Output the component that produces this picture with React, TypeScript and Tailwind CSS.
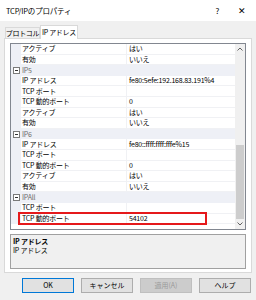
import React from 'react';

type Row = { name: string; value?: string; cat?: boolean };

const rows: Row[] = [
  { name: 'アクティブ', value: 'はい' },
  { name: '有効', value: 'いいえ' },
  { name: 'IP5', cat: true },
  { name: 'IP アドレス', value: 'fe80:5efe:192.168.83.191%4' },
  { name: 'TCP ポート', value: '' },
  { name: 'TCP 動的ポート', value: '0' },
  { name: 'アクティブ', value: 'はい' },
  { name: '有効', value: 'いいえ' },
  { name: 'IP6', cat: true },
  { name: 'IP アドレス', value: 'fe80::ffff:ffff:fffe%15' },
  { name: 'TCP ポート', value: '' },
  { name: 'TCP 動的ポート', value: '0' },
  { name: 'アクティブ', value: 'はい' },
  { name: '有効', value: 'いいえ' },
  { name: 'IPAll', cat: true },
  { name: 'TCP ポート', value: '' },
  { name: 'TCP 動的ポート', value: '54102' },
];

const font = "font-['Meiryo_UI','Noto_Sans_CJK_JP',sans-serif]";

const GridRow = ({ row }: { row: Row }) => {
  if (row.cat) {
    return (
      <div className="flex h-[10.6px] items-center bg-[#eef0f6]">
        <div className="w-[10px] flex justify-center">
          <div className="w-[7px] h-[7px] border border-[#7a7a7a] bg-white flex items-center justify-center">
            <div className="w-[3px] h-px bg-[#333]" />
          </div>
        </div>
        <span className="pl-[1px] text-[#6d6d6d]">{row.name}</span>
      </div>
    );
  }
  return (
    <div className="flex h-[10.6px] items-center">
      <div className="w-[10px] h-full bg-[#eef0f6]" />
      <div className="w-[106px] h-full flex items-center pl-[1px] border-b border-r border-[#f0f1f4] whitespace-nowrap">{row.name}</div>
      <div className="flex-1 h-full flex items-center pl-[2px] border-b border-[#f0f1f4] whitespace-nowrap">{row.value}</div>
    </div>
  );
};

const Button = ({ label, primary, disabled }: { label: string; primary?: boolean; disabled?: boolean }) => (
  <div
    className={`w-[52px] h-[15px] flex items-center justify-center text-[7px] border whitespace-nowrap ${
      disabled
        ? 'bg-[#cccccc] border-[#bfbfbf] text-[#9a9a9a]'
        : primary
        ? 'bg-[#e1e1e1] border-[#0078d7] text-black'
        : 'bg-[#e1e1e1] border-[#adadad] text-black'
    }`}
  >
    {label}
  </div>
);

export default function App() {
  return (
    <div className={`w-[256px] h-[300px] bg-[#f0f0f0] text-black overflow-hidden ${font}`}>
      {/* Title bar */}
      <div className="h-[21px] bg-white flex items-center pl-[6px] pr-[10px] text-[7.5px] tracking-[-0.2px]">
        <span className="flex-1">TCP/IPのプロパティ</span>
        <span className="w-[14px] text-center text-[8px]">?</span>
        <span className="ml-[14px] text-[9px] leading-none">✕</span>
      </div>

      {/* Tabs */}
      <div className="h-[17px] flex items-end pl-[5px] text-[7px] tracking-[-0.3px] whitespace-nowrap relative z-10">
        <div className="h-[11px] w-[35px] flex items-center justify-center border border-b-0 border-[#d9d9d9] bg-[#f0f0f0]">
          プロトコル
        </div>
        <div className="h-[14px] w-[38px] flex items-center justify-center border border-b-0 border-[#d9d9d9] bg-white -mb-px">
          IP アドレス
        </div>
      </div>

      {/* Panel */}
      <div className="mx-[4px] h-[235px] border border-[#d9d9d9] bg-white pt-[4px] px-[5px]">
        <div className="relative h-[187px] border border-[#828790] flex text-[7px] leading-none tracking-[-0.2px]">
          <div className="flex-1 bg-white overflow-hidden">
            {rows.map((r, i) => (
              <GridRow key={i} row={r} />
            ))}
          </div>
          {/* Scrollbar */}
          <div className="w-[10px] bg-[#f0f0f0] flex flex-col">
            <div className="h-[10px] flex items-center justify-center">
              <svg width="6" height="4" viewBox="0 0 6 4">
                <path d="M0.5 3.5 L3 1 L5.5 3.5" fill="none" stroke="#606060" strokeWidth="1" />
              </svg>
            </div>
            <div className="flex-1 flex flex-col">
              <div className="h-[91px]" />
              <div className="h-[74px] bg-[#cdcdcd] mx-px" />
            </div>
            <div className="h-[10px] flex items-center justify-center">
              <svg width="6" height="4" viewBox="0 0 6 4">
                <path d="M0.5 0.5 L3 3 L5.5 0.5" fill="none" stroke="#606060" strokeWidth="1" />
              </svg>
            </div>
          </div>
          {/* Highlight box */}
          <div className="absolute left-[7px] top-[168px] w-[189px] h-[13px] border-2 border-[#e5191b]" />
        </div>

        {/* Description */}
        <div className="mt-[4px] h-[35px] border border-[#a0a0a0] bg-[#f0f0f0] px-[2px] pt-[2px] text-[7px] leading-[9px] tracking-[-0.2px]">
          <div className="font-bold">IP アドレス</div>
          <div>IP アドレス</div>
        </div>
      </div>

      {/* Buttons */}
      <div className="mt-[5px] flex justify-end gap-[7px] pr-[5px]">
        <Button label="OK" primary />
        <Button label="キャンセル" />
        <Button label="適用(A)" disabled />
        <Button label="ヘルプ" />
      </div>
    </div>
  );
}
